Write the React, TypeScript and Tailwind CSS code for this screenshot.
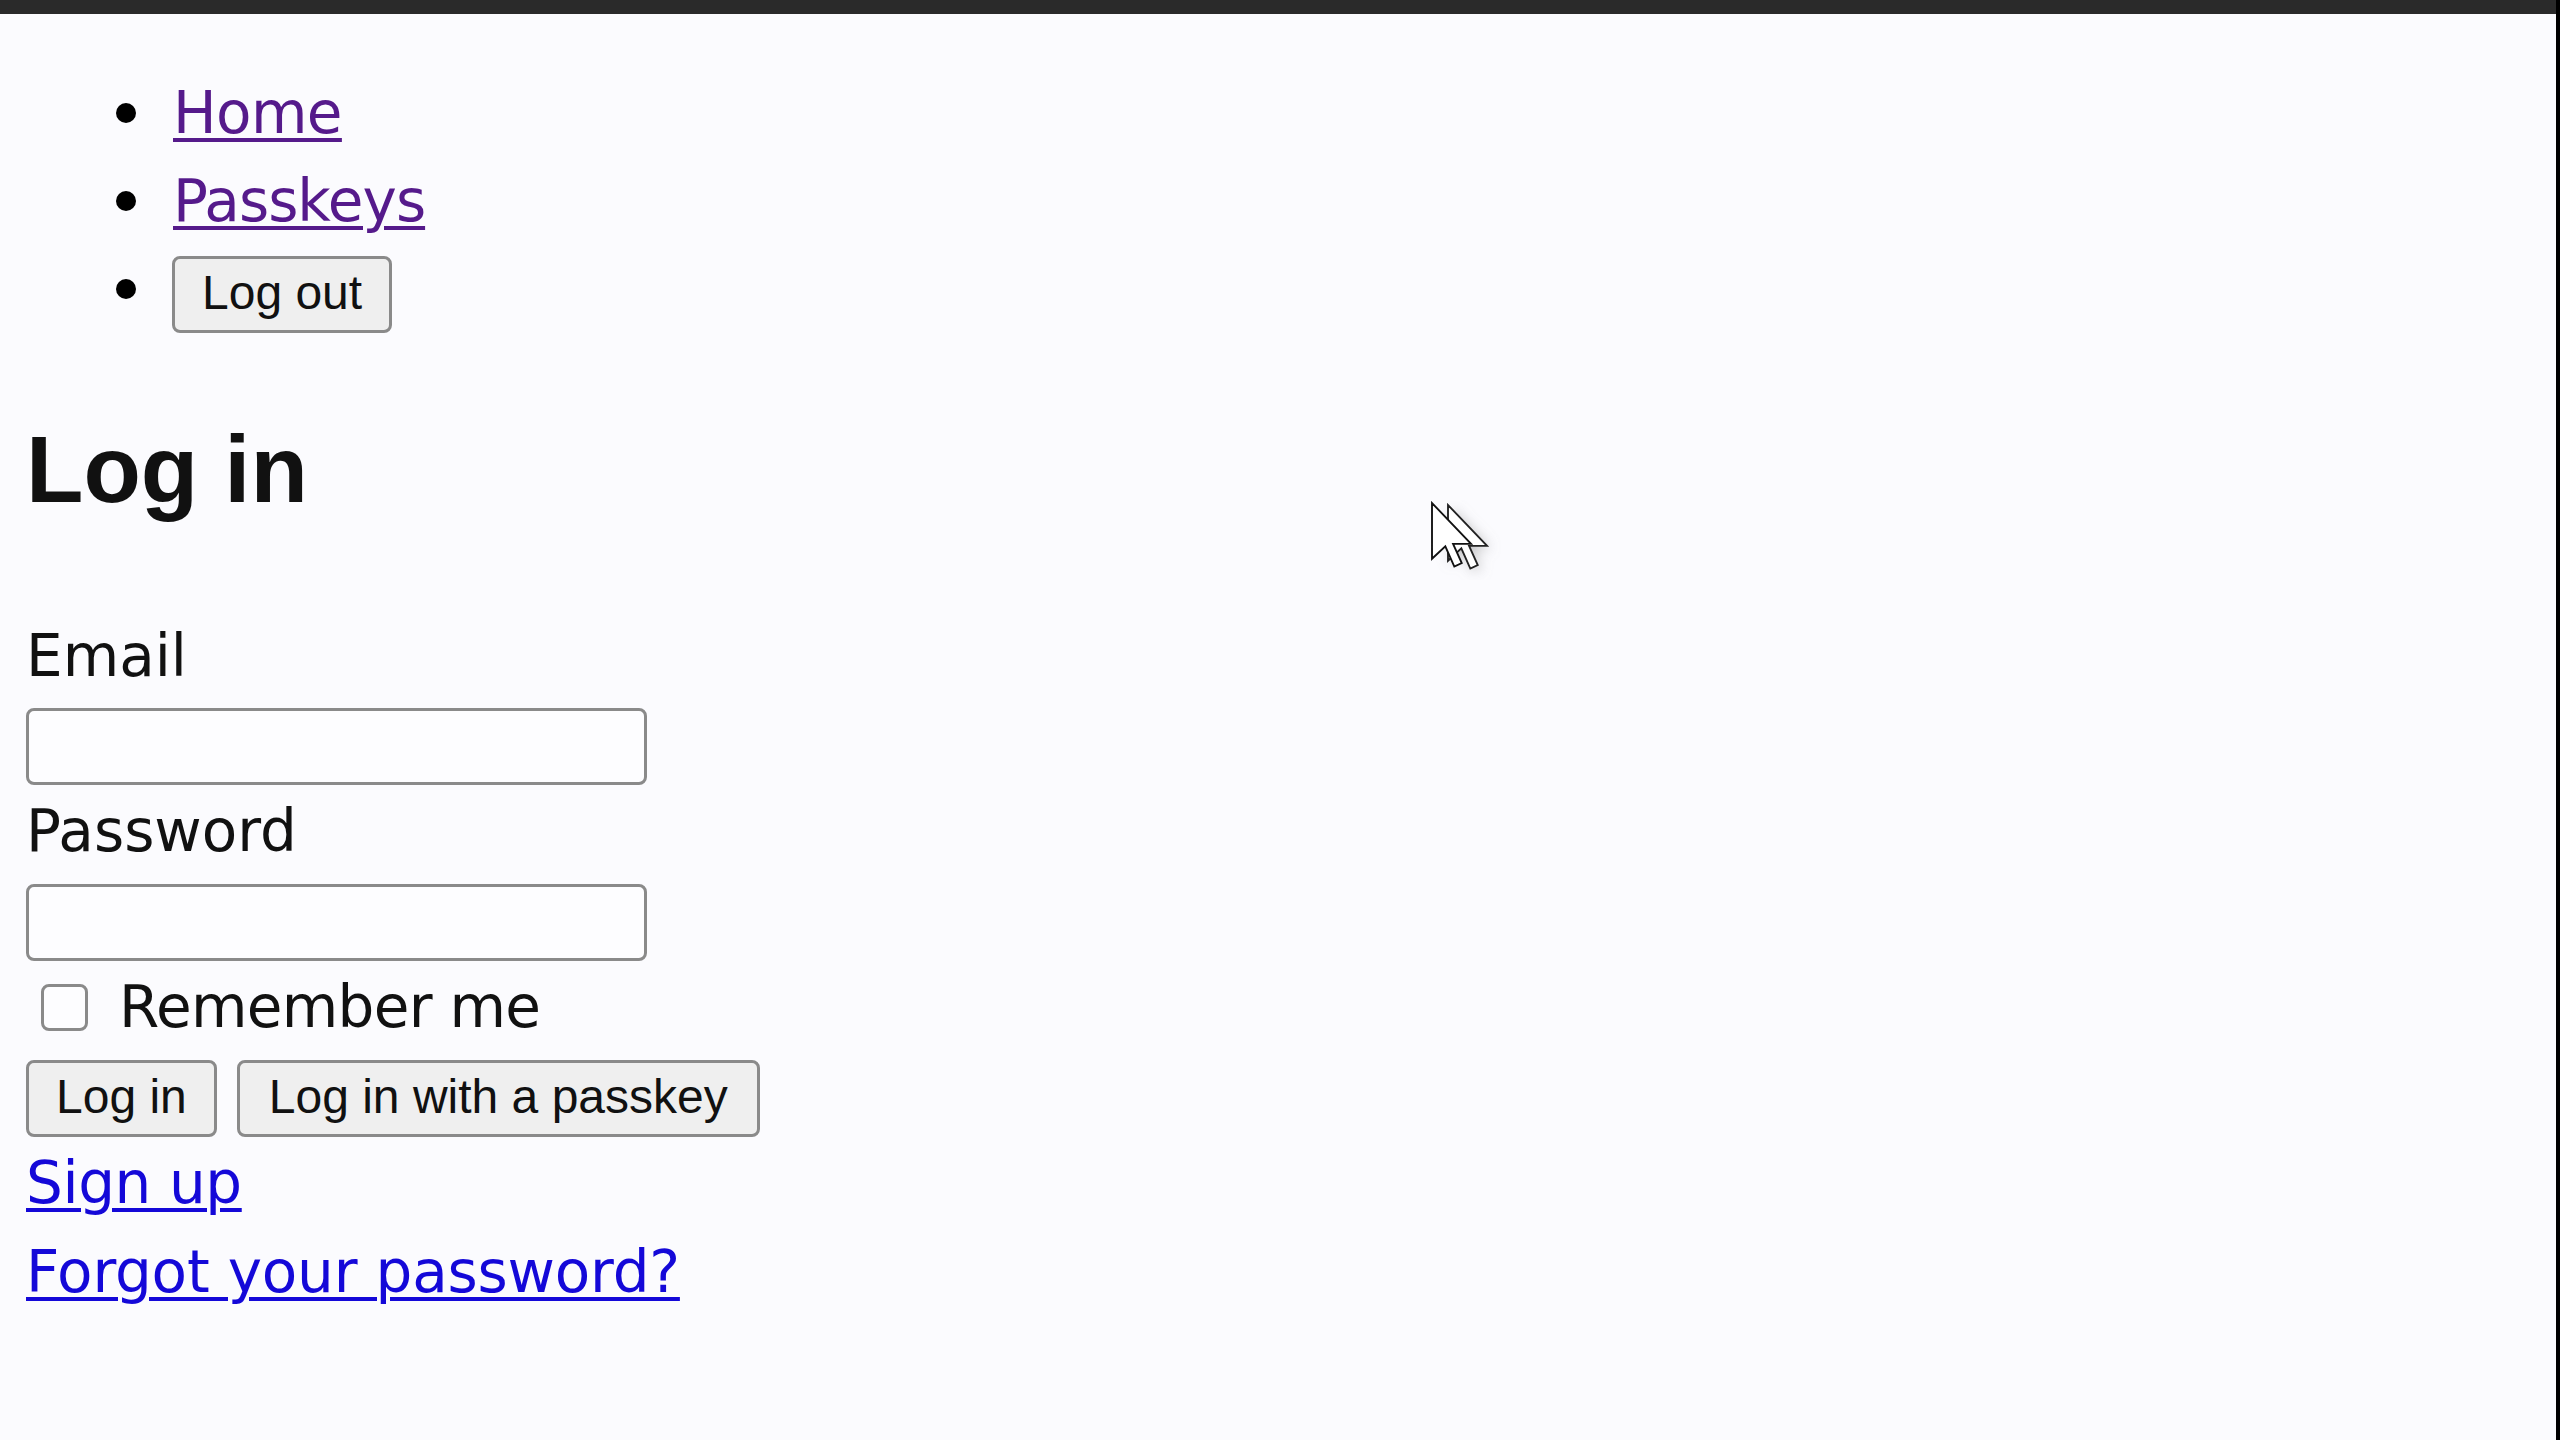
import React from "react";

const arrow = "M0 0 L0 18 L4.3 14 L7.2 20.5 L9.6 19.4 L6.8 13.2 L12.6 13.2 Z";

function Cursor() {
  return (
    <svg
      className="pointer-events-none absolute left-[1428px] top-[500px]"
      width="80"
      height="80"
      viewBox="0 0 80 80"
    >
      <defs>
        <filter id="blur" x="-50%" y="-50%" width="200%" height="200%">
          <feGaussianBlur stdDeviation="2" />
        </filter>
      </defs>
      <g transform="translate(23,8) scale(3.1)" filter="url(#blur)">
        <path d={arrow} fill="#9a9a9a" opacity="0.6" />
      </g>
      <g transform="translate(20,5) scale(3.1)">
        <path d={arrow} fill="#fff" stroke="#222" strokeWidth="0.6" strokeLinejoin="miter" />
      </g>
      <g transform="translate(4,3) scale(3.1)">
        <path d={arrow} fill="#fff" stroke="#111" strokeWidth="0.6" strokeLinejoin="miter" />
      </g>
    </svg>
  );
}

function Bullet() {
  return <span className="mt-[34px] h-5 w-5 shrink-0 rounded-full bg-black" />;
}

const btn =
  "flex h-[77px] items-center rounded-[8px] border-[3px] border-[#8a8a8a] bg-[#efefef] px-[27px] pb-1 font-['Liberation_Sans',Arial,sans-serif] text-[48px] leading-[53px] text-[#111]";

const field = "h-[77px] w-[621px] rounded-[8px] border-[3px] border-[#8a8a8a] bg-[#fdfdff] outline-none";

const visited = "text-[#551a8b] underline decoration-[4px] underline-offset-[5px]";
const link = "block w-fit text-[#1408d8] underline decoration-[4px] underline-offset-[5px]";

export default function App() {
  return (
    <div className="relative flex h-[1440px] w-[2560px] overflow-hidden bg-[#fbfbfe] font-['DejaVu_Sans',Verdana,sans-serif] text-[#111]">
      <div className="flex flex-1 flex-col">
        <div className="h-[14px] bg-[#2a2a2a]" />
        <div className="flex flex-col pl-[26px]">
          <ul className="mt-[55px] flex flex-col pl-[90px] text-[58px] leading-[88px]">
            <li className="flex h-[88px] items-start gap-[37px]">
              <Bullet />
              <a href="#" className={`${visited} tracking-[-0.6px]`}>
                Home
              </a>
            </li>
            <li className="flex h-[88px] items-start gap-[37px]">
              <Bullet />
              <a href="#" className={`${visited} tracking-[-1px]`}>
                Passkeys
              </a>
            </li>
            <li className="flex h-[88px] items-start gap-[36px]">
              <Bullet />
              <button type="button" className={`${btn} mt-[11px]`}>
                Log out
              </button>
            </li>
          </ul>

          <h1 className="mt-[90px] font-['Liberation_Sans',Arial,sans-serif] text-[94px] font-bold leading-[94px]">
            Log in
          </h1>

          <form className="flex flex-col text-[58px] leading-[88px]">
            <label htmlFor="email" className="mt-[95px] block">
              Email
            </label>
            <input id="email" type="email" className={`${field} mt-[8px]`} />
            <label htmlFor="password" className="mt-[2px] block">
              Password
            </label>
            <input id="password" type="password" className={`${field} mt-[9px]`} />
            <div className="mt-[2px] flex h-[88px] items-center">
              <input
                id="remember"
                type="checkbox"
                className="ml-[15px] h-[47px] w-[47px] appearance-none rounded-[8px] border-[3px] border-[#8a8a8a] bg-[#fdfdff]"
              />
              <label htmlFor="remember" className="ml-[31px] tracking-[-0.7px]">
                Remember me
              </label>
            </div>
            <div className="mt-[9px] flex gap-[20px]">
              <button type="submit" className={btn}>
                Log in
              </button>
              <button type="button" className={`${btn} px-[29px]`}>
                Log in with a passkey
              </button>
            </div>
            <a href="#" className={`${link} mt-[2px] tracking-[-0.4px]`}>
              Sign up
            </a>
            <a href="#" className={`${link} mt-[1px] tracking-[-0.2px]`}>
              Forgot your password?
            </a>
          </form>
        </div>
      </div>
      <div className="w-[4px] bg-black" />
      <Cursor />
    </div>
  );
}
